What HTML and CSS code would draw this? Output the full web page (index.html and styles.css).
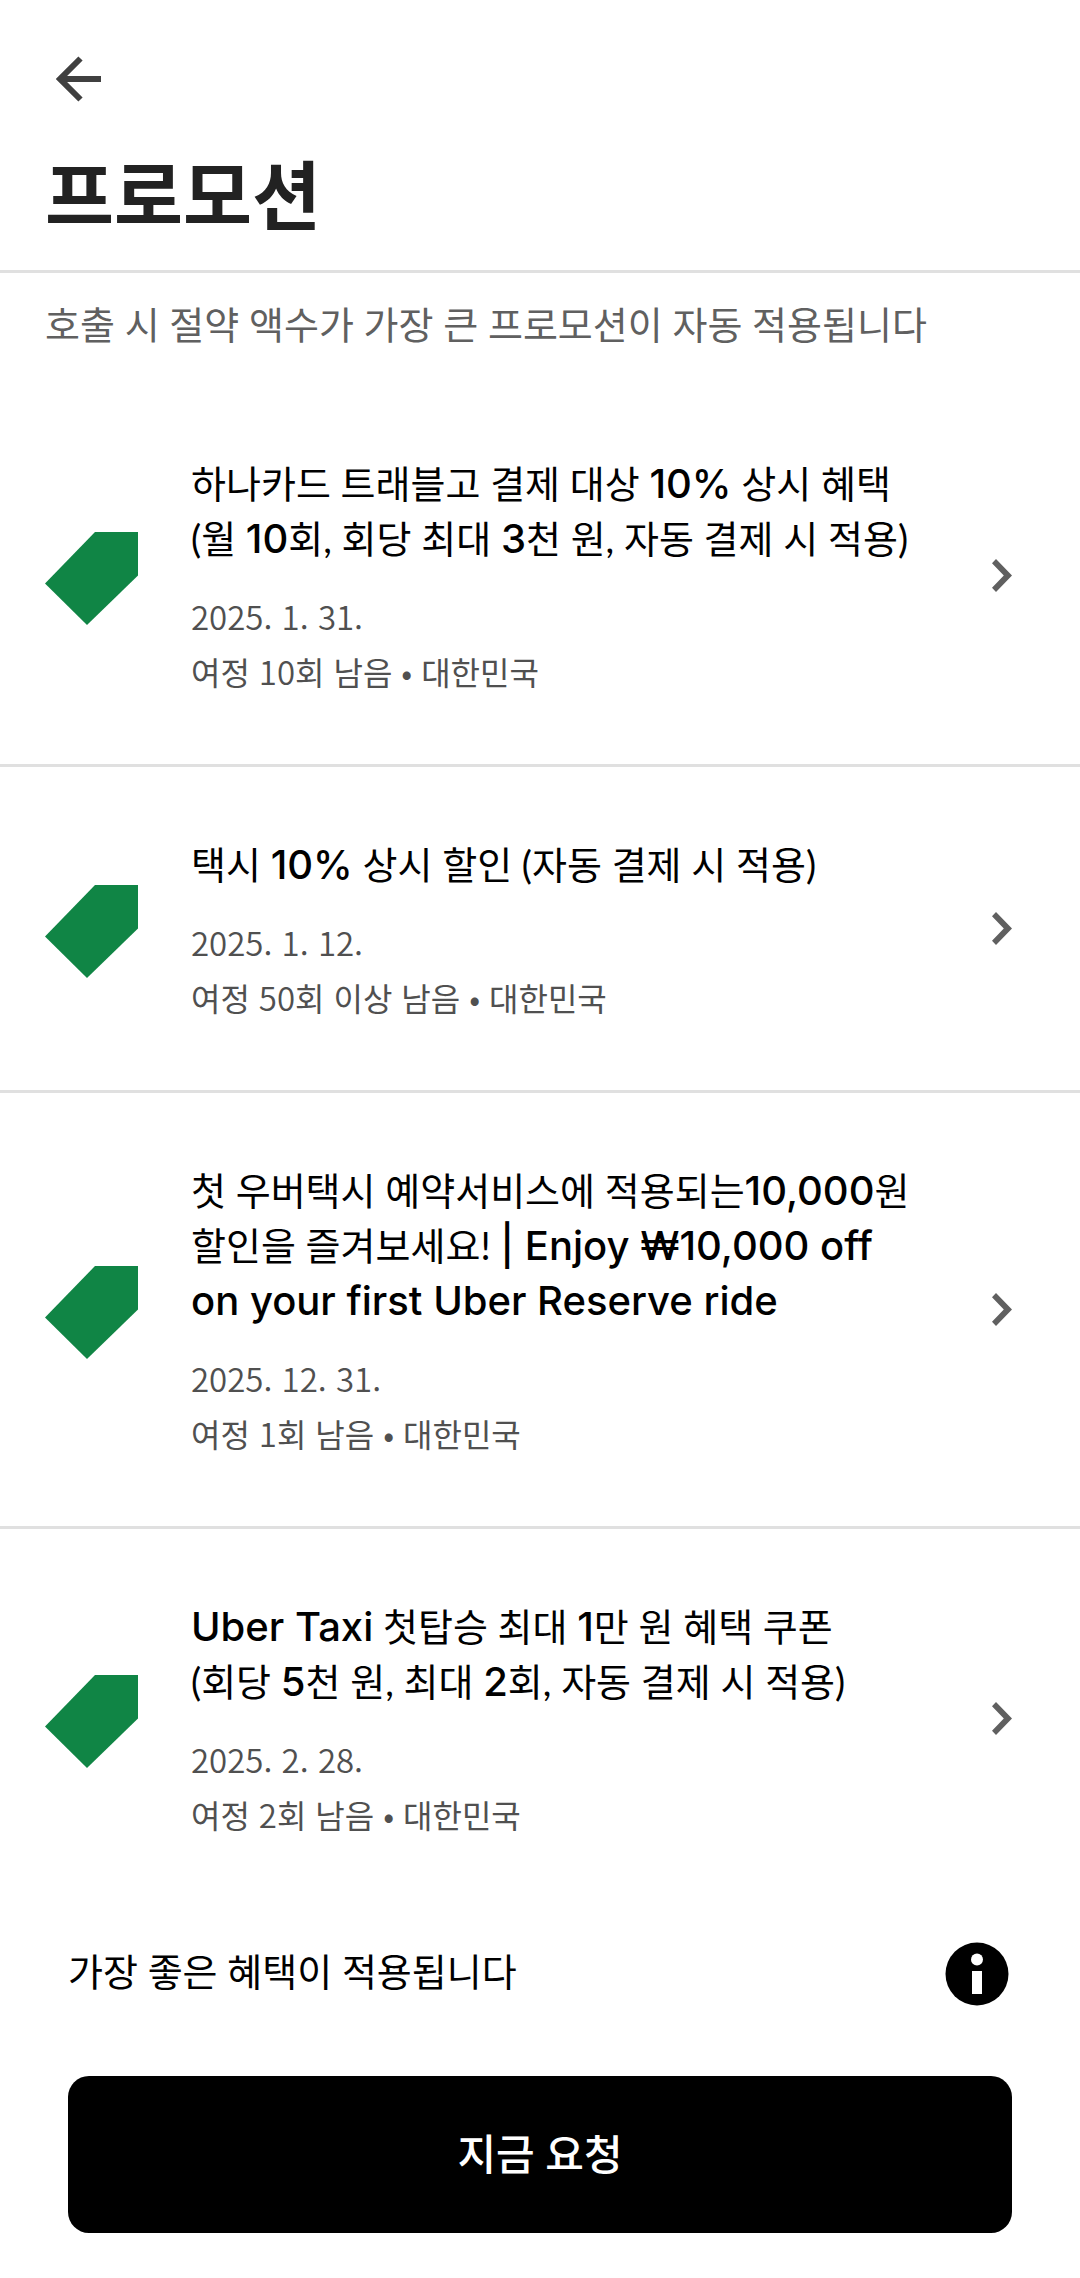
FILE: index.html
```html
<!DOCTYPE html>
<html lang="ko">
<head>
<meta charset="utf-8">
<meta name="viewport" content="width=device-width, initial-scale=1">
<title>프로모션</title>
<link rel="stylesheet" href="styles.css">
</head>
<body>
<svg class="defs" aria-hidden="true">
  <symbol id="tag" viewBox="0 0 93 99"><path d="M50 6h43v43.500L42 99 0 57.500z"/></symbol>
  <symbol id="chevron" viewBox="0 0 20 33"><path d="M4 0 20 16.500 4 33 0 28.800 11.800 16.500 0 4.200z"/></symbol>
</svg>
<header class="header">
  <button class="back" type="button" aria-label="뒤로">
    <svg viewBox="0 0 46 46"><path d="M24.500 2.500 4 23 24.500 43.500M4 23H45"/></svg>
  </button>
  <h1 class="title">프로모션</h1>
</header>
<main class="main">
  <p class="note">호출 시 절약 액수가 가장 큰 프로모션이 자동 적용됩니다</p>
  <ul class="list">
    <li><a class="promo" href="#">
      <svg class="tag"><use href="#tag"/></svg>
      <div class="body">
        <h2 class="name">하나카드 트래블고 결제 대상 <span class="en">10%</span> 상시 혜택<br>(월 <span class="en">10</span>회, 회당 최대 <span class="en">3</span>천 원, 자동 결제 시 적용)</h2>
        <p class="meta"><span class="num">2025. 1. 31.</span><br>여정 <span class="num">10</span>회 남음 • 대한민국</p>
      </div>
      <svg class="chevron"><use href="#chevron"/></svg>
    </a></li>
    <li><a class="promo" href="#">
      <svg class="tag"><use href="#tag"/></svg>
      <div class="body">
        <h2 class="name">택시 <span class="en">10%</span> 상시 할인 (자동 결제 시 적용)</h2>
        <p class="meta"><span class="num">2025. 1. 12.</span><br>여정 <span class="num">50</span>회 이상 남음 • 대한민국</p>
      </div>
      <svg class="chevron"><use href="#chevron"/></svg>
    </a></li>
    <li><a class="promo" href="#">
      <svg class="tag"><use href="#tag"/></svg>
      <div class="body">
        <h2 class="name">첫 우버택시 예약서비스에 적용되는<span class="en">10,000</span>원<br>할인을 즐겨보세요! <span class="en">| Enjoy ₩10,000 off<br>on your first Uber Reserve ride</span></h2>
        <p class="meta"><span class="num">2025. 12. 31.</span><br>여정 <span class="num">1</span>회 남음 • 대한민국</p>
      </div>
      <svg class="chevron"><use href="#chevron"/></svg>
    </a></li>
    <li><a class="promo" href="#">
      <svg class="tag"><use href="#tag"/></svg>
      <div class="body">
        <h2 class="name"><span class="en">Uber Taxi</span> 첫탑승 최대 <span class="en">1</span>만 원 혜택 쿠폰<br>(회당 <span class="en">5</span>천 원, 최대 <span class="en">2</span>회, 자동 결제 시 적용)</h2>
        <p class="meta"><span class="num">2025. 2. 28.</span><br>여정 <span class="num">2</span>회 남음 • 대한민국</p>
      </div>
      <svg class="chevron"><use href="#chevron"/></svg>
    </a></li>
  </ul>
</main>
<footer class="footer">
  <div class="benefit">
    <p class="benefit-text">가장 좋은 혜택이 적용됩니다</p>
    <button class="info" type="button" aria-label="정보">
      <svg viewBox="0 0 64 64"><circle cx="32" cy="32" r="31.500"/><circle class="mark" cx="32" cy="17.500" r="6"/><path class="mark" d="M27 29h10v23H27z"/></svg>
    </button>
  </div>
  <button class="request" type="button">지금 요청</button>
</footer>
</body>
</html>
```
FILE: styles.css
```css
* {
  box-sizing: border-box;
}

body {
  margin: 0;
  min-height: 100vh;
  display: flex;
  flex-direction: column;
  background: #fff;
  color: #000;
  font-family: Lato, "Noto Sans CJK KR", sans-serif;
  word-break: keep-all;
}

h1, h2, p, ul {
  margin: 0;
  padding: 0;
  font-weight: 400;
}

button {
  padding: 0;
  border: 0;
  background: none;
  font-family: inherit;
  cursor: pointer;
}

svg {
  display: block;
}

.defs {
  position: absolute;
  width: 0;
  height: 0;
}

.header {
  padding: 56px 45px 28px;
  border-bottom: 3px solid #e0e0e0;
}

.back {
  display: block;
  width: 46px;
  height: 46px;
  margin-left: 11px;
}

.back svg {
  width: 46px;
  height: 46px;
  fill: none;
  stroke: #404040;
  stroke-width: 6;
}

.title {
  margin-top: 40px;
  color: #222;
  font-family: "Noto Sans CJK KR", sans-serif;
  font-size: 75px;
  font-weight: 700;
  line-height: 100px;
}

.main {
  flex: 1;
}

.note {
  padding: 24px 45px 34px;
  color: #606060;
  font-size: 38px;
  line-height: 55px;
}

.list {
  list-style: none;
}

.list li + li {
  border-top: 3px solid #e0e0e0;
}

.promo {
  display: flex;
  align-items: center;
  padding: 65px 68px 65px 45px;
  color: inherit;
  text-decoration: none;
}

.tag {
  flex: none;
  width: 93px;
  height: 99px;
  fill: #108545;
}

.body {
  flex: 1;
  margin-left: 53px;
  padding-top: 5px;
}

.chevron {
  flex: none;
  width: 20px;
  height: 33px;
  fill: #606060;
}

.name {
  font-size: 38px;
  line-height: 55px;
}

.en {
  font-family: Inter, "Noto Sans CJK KR", sans-serif;
  font-size: 40px;
  font-weight: 500;
  line-height: 1;
}

.meta {
  margin-top: 23px;
  color: #505050;
  font-family: "Noto Sans CJK KR", sans-serif;
  font-size: 32px;
  line-height: 55px;
}

.num {
  font-size: 33px;
  font-weight: 350;
  line-height: 1;
}

.footer {
  padding: 34px 68px 45px;
}

.benefit {
  display: flex;
  align-items: center;
  justify-content: space-between;
  padding-right: 3px;
}

.benefit-text {
  padding-bottom: 5px;
  font-size: 38px;
  line-height: 55px;
}

.info,
.info svg {
  width: 64px;
  height: 64px;
}

.mark {
  fill: #fff;
}

.request {
  display: block;
  width: 100%;
  margin-top: 70px;
  padding: 48px;
  border-radius: 21px;
  background: #000;
  color: #fff;
  font-size: 42px;
  font-weight: 500;
  line-height: 61px;
}
```
